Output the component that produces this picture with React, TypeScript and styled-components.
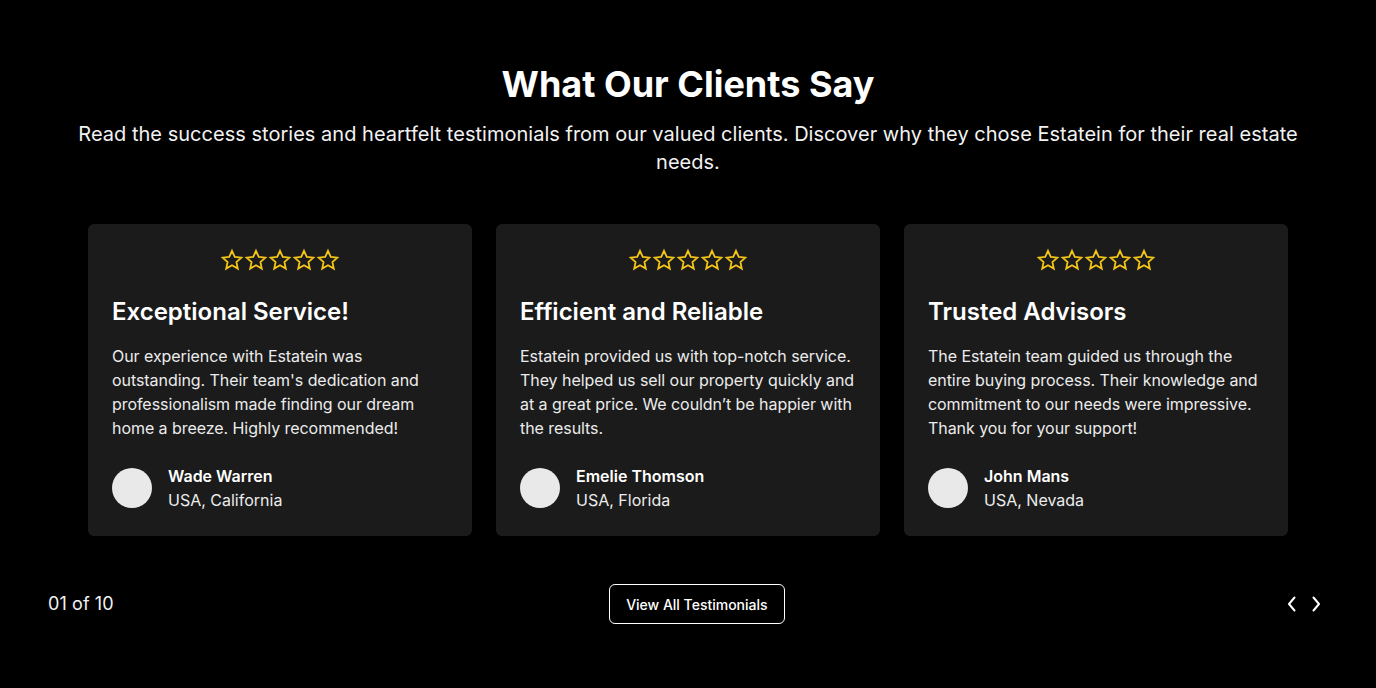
import React from "react";
import styled, { createGlobalStyle } from "styled-components";

const Global = createGlobalStyle`
  html, body { margin: 0; padding: 0; background: #000; }
  body { font-family: Inter, "Noto Sans", sans-serif; color: #fff; }
  * { box-sizing: border-box; }
`;

const Section = styled.section`
  width: 1376px;
  min-height: 688px;
  background: #000;
  padding: 60px 48px 0;
  display: flex;
  flex-direction: column;
  align-items: center;
`;

const Title = styled.h2`
  margin: 0;
  font-size: 36px;
  line-height: 48px;
  font-weight: 700;
  color: #fff;
`;

const Subtitle = styled.p`
  margin: 12px 0 0;
  font-size: 20px;
  line-height: 28px;
  font-weight: 400;
  color: #f2f2f2;
  text-align: center;
  max-width: 1280px;
  letter-spacing: 0.02px;
`;

const Cards = styled.div`
  margin-top: 48px;
  display: grid;
  grid-template-columns: repeat(3, 384px);
  gap: 24px;
`;

const Card = styled.article`
  background: #1b1b1b;
  border-radius: 6px;
  padding: 24px;
  display: flex;
  flex-direction: column;
`;

const Stars = styled.div`
  display: flex;
  justify-content: center;
  height: 24px;
`;

const CardTitle = styled.h3`
  margin: 24px 0 0;
  font-size: 24px;
  line-height: 32px;
  font-weight: 600;
  color: #fff;
`;

const Body = styled.p`
  margin: 16px 0 0;
  font-size: 16px;
  line-height: 24px;
  color: #ececec;
  letter-spacing: -0.06px;
`;

const Author = styled.div`
  margin-top: 24px;
  display: flex;
  align-items: center;
  gap: 16px;
`;

const Avatar = styled.div`
  width: 40px;
  height: 40px;
  border-radius: 50%;
  background: #e9e9e9;
  flex-shrink: 0;
`;

const AuthorInfo = styled.div`
  display: flex;
  flex-direction: column;
`;

const Name = styled.span`
  font-size: 16px;
  line-height: 24px;
  font-weight: 600;
  color: #fff;
`;

const Place = styled.span`
  font-size: 16px;
  line-height: 24px;
  color: #ececec;
`;

const Footer = styled.div`
  margin-top: 48px;
  width: 100%;
  display: flex;
  justify-content: space-between;
  align-items: center;
  height: 40px;
`;

const Counter = styled.span`
  font-size: 18px;
  line-height: 24px;
  color: #f2f2f2;
  letter-spacing: 0.1px;
`;

const ViewAll = styled.button`
  height: 40px;
  padding: 0 16px;
  background: transparent;
  border: 1px solid #fff;
  border-radius: 6px;
  color: #fff;
  font-family: Inter, sans-serif;
  font-size: 14px;
  font-weight: 500;
  cursor: pointer;
`;

const Nav = styled.div`
  display: flex;
`;

const NavButton = styled.button`
  width: 24px;
  height: 24px;
  padding: 0;
  background: none;
  border: none;
  display: flex;
  align-items: center;
  justify-content: center;
  cursor: pointer;
`;

const StarIcon = () => (
  <svg width="24" height="24" viewBox="0 0 24 24">
    <path
      d="M12 2.8 L14.75 8.9 L21.3 9.6 L16.4 14.05 L17.8 20.6 L12 17.25 L6.2 20.6 L7.6 14.05 L2.7 9.6 L9.25 8.9 Z"
      fill="none"
      stroke="#f2c318"
      strokeWidth="1.8"
      strokeLinejoin="miter"
    />
  </svg>
);

const Chevron = ({ dir }: { dir: "left" | "right" }) => (
  <svg width="10" height="16" viewBox="0 0 10 16">
    <path
      d={dir === "left" ? "M7.5 1.5 L2 8 L7.5 14.5" : "M2.5 1.5 L8 8 L2.5 14.5"}
      fill="none"
      stroke="#fff"
      strokeWidth="2"
      strokeLinecap="round"
      strokeLinejoin="round"
    />
  </svg>
);

const testimonials = [
  {
    title: "Exceptional Service!",
    body: "Our experience with Estatein was outstanding. Their team's dedication and professionalism made finding our dream home a breeze. Highly recommended!",
    name: "Wade Warren",
    place: "USA, California",
  },
  {
    title: "Efficient and Reliable",
    body: "Estatein provided us with top-notch service. They helped us sell our property quickly and at a great price. We couldn\u2019t be happier with the results.",
    name: "Emelie Thomson",
    place: "USA, Florida",
  },
  {
    title: "Trusted Advisors",
    body: "The Estatein team guided us through the entire buying process. Their knowledge and commitment to our needs were impressive. Thank you for your support!",
    name: "John Mans",
    place: "USA, Nevada",
  },
];

export default function App() {
  return (
    <>
      <Global />
      <Section>
        <Title>What Our Clients Say</Title>
        <Subtitle>
          Read the success stories and heartfelt testimonials from our valued clients. Discover why they chose Estatein for their real estate needs.
        </Subtitle>
        <Cards>
          {testimonials.map((t) => (
            <Card key={t.name}>
              <Stars>
                {[0, 1, 2, 3, 4].map((i) => (
                  <StarIcon key={i} />
                ))}
              </Stars>
              <CardTitle>{t.title}</CardTitle>
              <Body>{t.body}</Body>
              <Author>
                <Avatar />
                <AuthorInfo>
                  <Name>{t.name}</Name>
                  <Place>{t.place}</Place>
                </AuthorInfo>
              </Author>
            </Card>
          ))}
        </Cards>
        <Footer>
          <Counter>01 of 10</Counter>
          <ViewAll>View All Testimonials</ViewAll>
          <Nav>
            <NavButton aria-label="Previous">
              <Chevron dir="left" />
            </NavButton>
            <NavButton aria-label="Next">
              <Chevron dir="right" />
            </NavButton>
          </Nav>
        </Footer>
      </Section>
    </>
  );
}
